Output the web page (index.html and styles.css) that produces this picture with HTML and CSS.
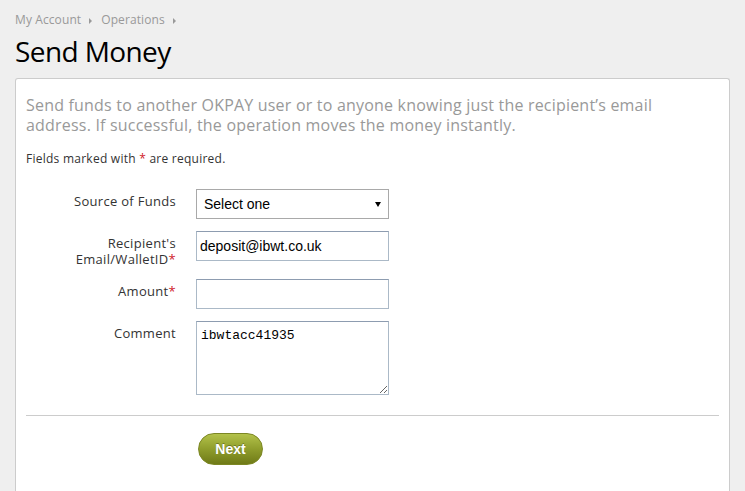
FILE: index.html
```html
<!DOCTYPE html>
<html>
<head>
<meta charset="utf-8">
<link rel="stylesheet" href="styles.css">
</head>
<body>
<div class="page">
  <div class="crumbs">
    <span>My Account</span><span class="tri"></span>
    <span>Operations</span><span class="tri"></span>
  </div>
  <h1 class="title">Send Money</h1>
  <div class="panel">
    <p class="intro">Send funds to another OKPAY user or to anyone knowing just the recipient’s email address. If successful, the operation moves the money instantly.</p>
    <p class="note">Fields marked with <span class="req">*</span> are required.</p>
    <form class="form">
      <label class="lbl">Source of Funds</label>
      <div class="sel"><span>Select one</span><span class="arrow"></span></div>
      <label class="lbl">Recipient's<br>Email/WalletID<span class="req">*</span></label>
      <input class="inp" type="text" value="deposit@ibwt.co.uk">
      <label class="lbl">Amount<span class="req">*</span></label>
      <input class="inp" type="text" value="">
      <label class="lbl">Comment</label>
      <textarea class="txt">ibwtacc41935</textarea>
    </form>
    <hr class="sep">
    <div class="actions"><button class="btn" type="button">Next</button></div>
  </div>
</div>
</body>
</html>
```

FILE: styles.css
```css
html, body { margin: 0; padding: 0; background: #efefef; height: 100%; overflow: hidden; }
.page { padding: 0 15px; font-family: "Open Sans", "DejaVu Sans", sans-serif; }
.crumbs { padding-top: 11px; height: 18px; font-size: 12px; line-height: 18px; color: #999; display: flex; align-items: center; letter-spacing: 0.1px; }
.tri { display: inline-block; width: 0; height: 0; border-left: 3px solid #999; border-top: 3px solid transparent; border-bottom: 3px solid transparent; margin: 1px 9px 0 8px; }
.title { margin: 3px 0 0; font-size: 28px; font-weight: normal; line-height: 38px; color: #000; letter-spacing: -0.6px; }
.panel { margin-top: 8px; background: #fff; border: 1px solid #ccc; border-bottom: none; border-radius: 3px 3px 0 0; padding: 16px 10px 0; height: 397px; }
.intro { margin: 0; max-width: 655px; font-size: 16px; line-height: 20px; color: #999; letter-spacing: 0.2px; }
.note { margin: 16px 0 0; font-size: 12px; line-height: 16px; color: #333; letter-spacing: 0.25px; }
.req { color: #d0202a; }
.form { display: grid; grid-template-columns: 150px 193px; column-gap: 20px; row-gap: 12px; margin-top: 22px; }
.lbl { text-align: right; font-size: 13px; line-height: 16px; padding-top: 4px; color: #333; letter-spacing: 0.3px; }
.sel { height: 30px; box-sizing: border-box; border: 1px solid #a9a9a9; display: flex; align-items: center; justify-content: space-between; padding: 0 7px 0 7px; font-family: "Liberation Sans", Arial, sans-serif; font-size: 14px; color: #000; background: #fff; }
.arrow { width: 0; height: 0; border-top: 5px solid #000; border-left: 3px solid transparent; border-right: 3px solid transparent; }
.inp { height: 30px; box-sizing: border-box; border: 1px solid #abb9c7; border-top-color: #8d9cb0; padding: 0 3px; margin: 0; font-family: "Liberation Sans", Arial, sans-serif; font-size: 14px; color: #000; outline: none; }
.txt { height: 74px; box-sizing: border-box; border: 1px solid #abb9c7; border-top-color: #8d9cb0; padding: 6px 4px; margin: 0; font-family: "Liberation Mono", "Courier New", monospace; font-size: 13px; color: #000; outline: none; resize: both; }
.sep { margin: 20px 0 0; border: none; border-top: 1px solid #ccc; height: 0; }
.actions { padding: 17px 0 0 172px; }
.btn { width: 65px; height: 32px; border-radius: 16px; border: 1px solid #7c8724; background: linear-gradient(#b3c24a, #8f9d2c 50%, #6f7a17); color: #fff; font-family: "Liberation Sans", Arial, sans-serif; font-weight: bold; font-size: 14px; text-shadow: 0 -1px 0 rgba(0,0,0,0.3); padding: 0; }
```
